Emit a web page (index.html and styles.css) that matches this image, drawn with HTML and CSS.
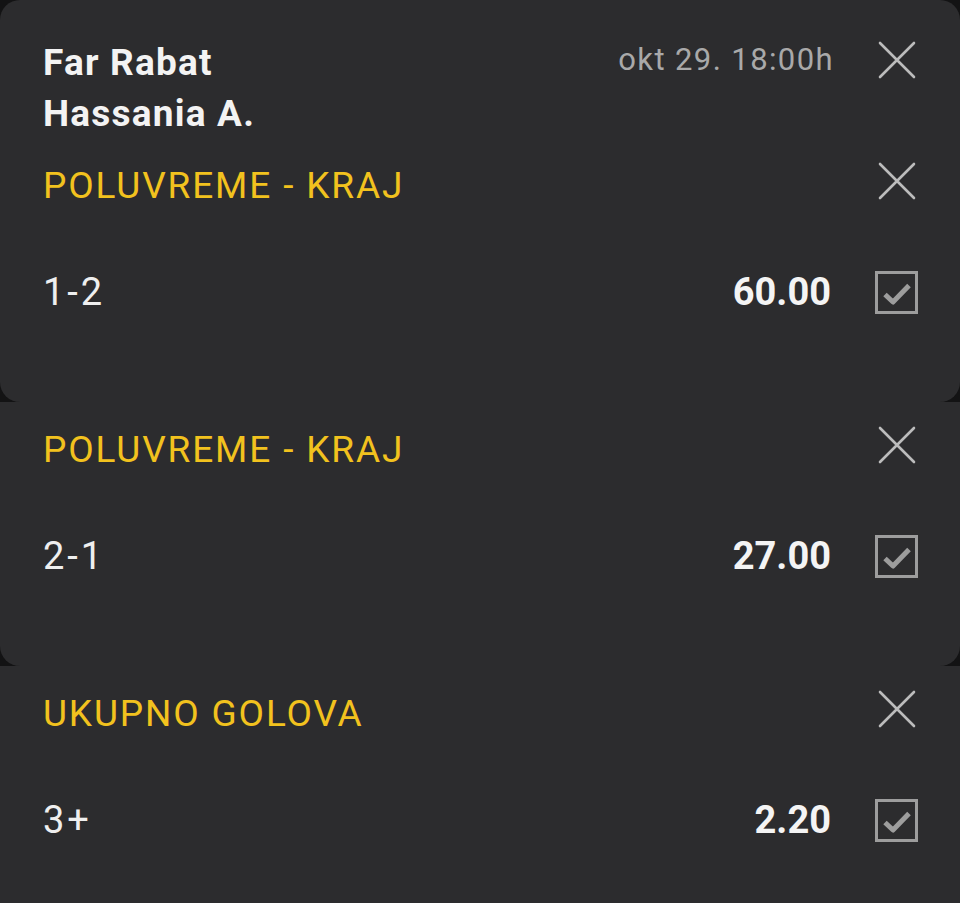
FILE: index.html
```html
<!DOCTYPE html>
<html lang="sr">
<head>
<meta charset="utf-8">
<title>Tiket</title>
<link rel="stylesheet" href="styles.css">
</head>
<body>
<div class="slip">
  <section class="card card-first">
    <header class="match">
      <div class="teams">
        <div class="team">Far Rabat</div>
        <div class="team">Hassania A.</div>
      </div>
      <div class="time">okt 29. 18:00h</div>
      <span class="close"><svg viewBox="0 0 38 38" width="38" height="38"><path d="M2 2L36 36M36 2L2 36"/></svg></span>
    </header>
    <div class="bet">
      <div class="bet-head">
        <span class="market">POLUVREME - KRAJ</span>
        <span class="close"><svg viewBox="0 0 38 38" width="38" height="38"><path d="M2 2L36 36M36 2L2 36"/></svg></span>
      </div>
      <div class="bet-row">
        <span class="pick">1-2</span>
        <span class="odd">60.00</span>
        <span class="check"><svg viewBox="0 0 43 43" width="43" height="43"><rect x="1.5" y="1.5" width="40" height="40"/><path d="M10 23.5L18 31L34 14.5"/></svg></span>
      </div>
    </div>
  </section>
  <section class="card">
    <div class="bet">
      <div class="bet-head">
        <span class="market">POLUVREME - KRAJ</span>
        <span class="close"><svg viewBox="0 0 38 38" width="38" height="38"><path d="M2 2L36 36M36 2L2 36"/></svg></span>
      </div>
      <div class="bet-row">
        <span class="pick">2-1</span>
        <span class="odd">27.00</span>
        <span class="check"><svg viewBox="0 0 43 43" width="43" height="43"><rect x="1.5" y="1.5" width="40" height="40"/><path d="M10 23.5L18 31L34 14.5"/></svg></span>
      </div>
    </div>
  </section>
  <section class="card">
    <div class="bet">
      <div class="bet-head">
        <span class="market">UKUPNO GOLOVA</span>
        <span class="close"><svg viewBox="0 0 38 38" width="38" height="38"><path d="M2 2L36 36M36 2L2 36"/></svg></span>
      </div>
      <div class="bet-row">
        <span class="pick">3+</span>
        <span class="odd">2.20</span>
        <span class="check"><svg viewBox="0 0 43 43" width="43" height="43"><rect x="1.5" y="1.5" width="40" height="40"/><path d="M10 23.5L18 31L34 14.5"/></svg></span>
      </div>
    </div>
  </section>
</div>
</body>
</html>
```

FILE: styles.css
```css
html, body {
  margin: 0;
  padding: 0;
  background: #131314;
  height: 100%;
  overflow: hidden;
}
body {
  font-family: Roboto, "Liberation Sans", sans-serif;
  color: #f1f1f1;
}
.slip {
  display: flex;
  flex-direction: column;
}
.card {
  background: #2c2c2e;
  border-radius: 0 0 20px 20px;
  padding: 0 43px 80px 43px;
}
.card-first {
  border-radius: 20px;
}
.match {
  display: flex;
  align-items: flex-start;
  height: 138px;
  box-sizing: border-box;
  padding-top: 37px;
}
.teams {
  flex: 1;
}
.team {
  font-weight: 700;
  font-size: 37px;
  line-height: 51px;
  letter-spacing: 1.2px;
  color: #f3f3f3;
}
.time {
  font-size: 31px;
  line-height: 46px;
  color: #a9a9a9;
  letter-spacing: 1.4px;
  margin-right: 44px;
}
.close {
  display: flex;
  width: 38px;
  height: 38px;
  margin-right: 1px;
}
.match .close {
  margin-top: 4px;
}
.close svg path {
  stroke: #bcbcbc;
  stroke-width: 2.6;
  stroke-linecap: round;
  fill: none;
}
.bet {
  padding-top: 18px;
}
.bet-head {
  display: flex;
  align-items: center;
  height: 60px;
}
.market {
  flex: 1;
  font-size: 37px;
  line-height: 60px;
  letter-spacing: 1.85px;
  color: #f2c21e;
}
.bet-head .close {
  margin-top: -10px;
}
.bet-row {
  display: flex;
  align-items: center;
  height: 60px;
  margin-top: 46px;
}
.pick {
  flex: 1;
  font-size: 38px;
  line-height: 60px;
  letter-spacing: 3px;
  color: #efefef;
}
.odd {
  font-weight: 700;
  font-size: 38px;
  line-height: 60px;
  letter-spacing: 0;
  color: #f4f4f4;
  margin-right: 44px;
}
.check {
  display: flex;
  width: 43px;
  height: 43px;
  margin-right: -1px;
}
.check svg rect {
  fill: none;
  stroke: #9d9d9d;
  stroke-width: 3;
}
.check svg path {
  fill: none;
  stroke: #9d9d9d;
  stroke-width: 5;
  stroke-linejoin: round;
}
```
